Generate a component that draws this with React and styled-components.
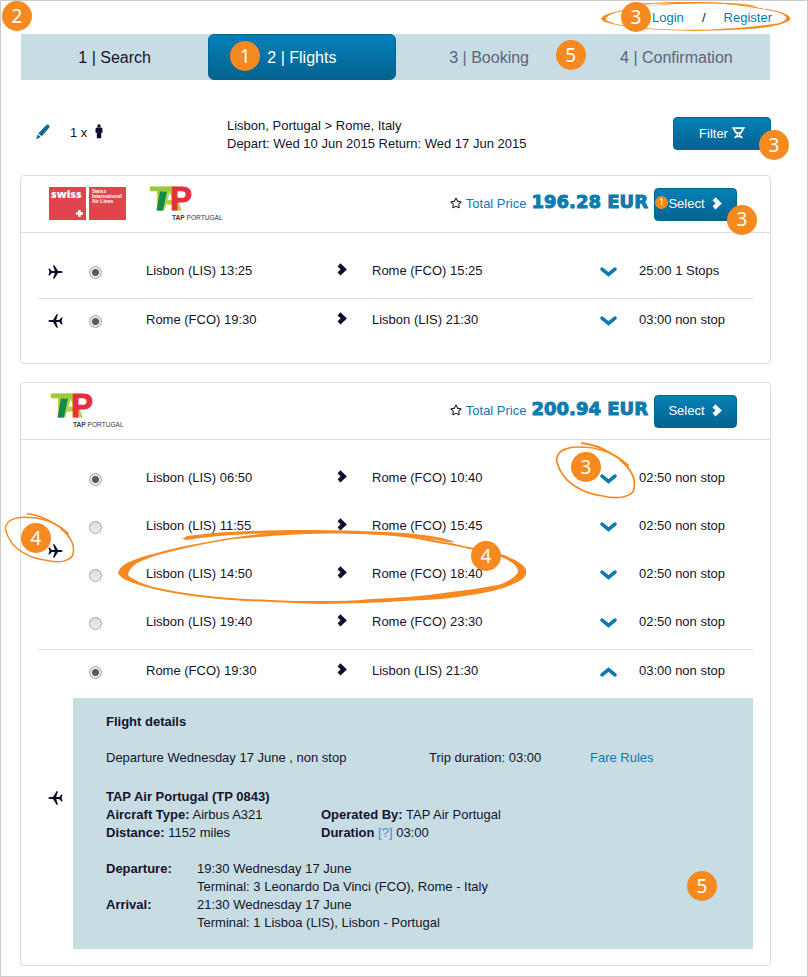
import { Fragment, useState } from 'react';
import styled, { createGlobalStyle } from 'styled-components';
import { FaRegStar } from 'react-icons/fa';

const GlobalStyle = createGlobalStyle`
  * {
    box-sizing: border-box;
  }
  body {
    margin: 0;
    background-color: #ffffff;
    color: #14142b;
    font-family: 'Liberation Sans', Arial, Helvetica, sans-serif;
    font-size: 13px;
    line-height: 18px;
  }
  a {
    color: #0b7bb0;
    text-decoration: none;
  }
  svg {
    display: block;
    overflow: visible;
  }
`;

// Styled Components
const Page = styled.div`
  position: relative;
  min-height: 100vh;
  padding: 0 36px 10px 19px;
  border: 1px solid #cccccc;
`;

const TopBar = styled.div`
  display: flex;
  justify-content: flex-end;
  height: 33px;
  padding-top: 8px;
`;

const AccountLinks = styled.div`
  position: relative;
  display: flex;
  justify-content: space-between;
  width: 120px;
  margin-right: -1px;
`;

const Steps = styled.nav`
  display: grid;
  grid-template-columns: repeat(4, 1fr);
  height: 46px;
  margin: 0 1px;
  background-color: #c8dce3;
`;

const Step = styled.a`
  position: relative;
  display: flex;
  align-items: center;
  justify-content: center;
  padding-top: 2px;
  border-radius: ${({ $active }) => ($active ? '6px' : '0')};
  border: 1px solid ${({ $active }) => ($active ? '#04638f' : 'transparent')};
  background: ${({ $active }) => ($active ? 'linear-gradient(#0580b8, #04638f)' : 'none')};
  color: ${({ $active, $done }) => ($active ? '#ffffff' : $done ? '#14142b' : '#5c647c')};
  font-size: 16px;
`;

const TripBar = styled.section`
  display: grid;
  grid-template-columns: 207px 1fr auto;
  height: 95px;
  padding-top: 37px;
`;

const Travellers = styled.div`
  display: flex;
  align-items: center;
  align-self: start;
  height: 30px;
  padding-left: 16px;
`;

const EditButton = styled.button`
  padding: 0;
  margin-right: 20px;
  border: none;
  background: none;
  cursor: pointer;
`;

const TravellerCount = styled.span`
  padding-top: 2px;
  margin-right: 8px;
`;

const TravellerIcon = styled.span`
  padding-bottom: 2px;
`;

const BlueButton = styled.button`
  position: relative;
  display: flex;
  align-items: center;
  justify-content: center;
  gap: ${({ $gap }) => $gap}px;
  width: ${({ $width }) => $width}px;
  height: 33px;
  padding: 0;
  border: 1px solid #04638f;
  border-radius: 4px;
  background: linear-gradient(#0580b8, #04638f);
  color: #ffffff;
  font: inherit;
  cursor: pointer;

  & > svg {
    margin-bottom: 2px;
  }
`;

const Card = styled.section`
  margin-bottom: 18px;
  border: 1px solid #dddddd;
  border-radius: 4px;

  &:last-child {
    margin-bottom: 0;
  }
`;

const CardHeader = styled.header`
  display: flex;
  align-items: center;
  justify-content: space-between;
  height: 57px;
  padding: 0 33px 0 28px;
  border-bottom: 1px solid #dddddd;
`;

const Logos = styled.div`
  display: flex;
  gap: 22px;
`;

const PriceArea = styled.div`
  display: flex;
  align-items: center;

  & > svg {
    margin-bottom: 2px;
  }
`;

const PriceLabel = styled.span`
  margin: 0 5px 0 4px;
  color: #0b7bb0;
`;

const Price = styled.strong`
  margin-right: 6px;
  padding-bottom: 4px;
  color: #0b7bb0;
  font-family: 'DejaVu Sans', Verdana, sans-serif;
  font-size: 18px;
  font-weight: bold;
  -webkit-text-stroke: 1px #0b7bb0;
`;

const CardBody = styled.div`
  padding: 17px 17px 16px;
`;

const Leg = styled.div`
  display: grid;
  grid-template-columns: 35px 1fr;

  & + & {
    border-top: 1px solid #dddddd;
  }
`;

const Direction = styled.div`
  display: flex;
  align-items: center;
  justify-content: center;
  padding-bottom: 4px;
`;

const PlaneBox = styled.div`
  position: relative;

  & > svg:first-child {
    transform: ${({ $back }) => ($back ? 'scaleX(-1)' : 'none')};
  }
`;

const Row = styled.div`
  position: relative;
  display: grid;
  grid-template-columns: 73px 191fr 35px 228fr 39px 114fr;
  align-items: center;
  padding: 12px 0 18px;
`;

const Radio = styled.input`
  appearance: none;
  width: 13px;
  height: 13px;
  margin: 2px 0 0 16px;
  border: 1px solid #a5a5a5;
  border-radius: 50%;
  background: linear-gradient(#dcdcdc, #ececec);

  &:checked {
    background: radial-gradient(circle, #5a5a5a 0 3px, #e6e6e6 4px);
  }
`;

const Place = styled.label`
  position: relative;
  height: 18px;
`;

const ArrowCell = styled.span`
  padding-bottom: 4px;
`;

const ExpandCell = styled.div`
  position: relative;
  height: 18px;
  padding-top: 5px;
`;

const ExpandButton = styled.button`
  display: block;
  padding: 0;
  border: none;
  background: none;
  cursor: pointer;
`;

const Details = styled.div`
  position: relative;
  padding: 15px 0 17px 33px;
  background-color: #c8dce3;
`;

const DetailsTitle = styled.h3`
  margin: 0 0 18px;
  font-size: 13px;
`;

const Summary = styled.div`
  display: grid;
  grid-template-columns: 323fr 161fr 163fr;
  margin-bottom: 21px;
`;

const Facts = styled.div`
  display: grid;
  grid-template-columns: 215fr 432fr;
  margin-bottom: 18px;
`;

const Times = styled.dl`
  display: grid;
  grid-template-columns: 91px 1fr;
  margin: 0;

  dt {
    font-weight: bold;
  }
  dd {
    margin: 0;
  }
`;

const HelpLink = styled.a`
  color: #4a8ccc;
`;

const Badge = styled.span`
  position: absolute;
  z-index: 2;
  top: ${({ $top }) => $top};
  left: ${({ $left }) => $left};
  right: ${({ $right }) => $right};
  bottom: ${({ $bottom }) => $bottom};
  display: flex;
  align-items: center;
  justify-content: center;
  width: ${({ $small }) => ($small ? 13 : 30)}px;
  height: ${({ $small }) => ($small ? 13 : 30)}px;
  border-radius: 50%;
  background-color: #f6891f;
  color: #ffffff;
  font-family: 'Noto Sans', 'Open Sans', sans-serif;
  font-size: ${({ $small }) => ($small ? 8 : 19)}px;
  font-weight: normal;
  line-height: 1;
`;

const Scribble = styled.svg`
  position: absolute;
  z-index: 1;
  top: ${({ $top }) => $top};
  left: ${({ $left }) => $left};
  width: ${({ $width }) => $width};
  height: ${({ $height }) => $height};
  pointer-events: none;
`;

// Drawings
const WideScribble = (props) => (
  <Scribble viewBox="0 0 407 74" preserveAspectRatio="none" aria-hidden="true" {...props}>
    <path
      fill="#f6891f"
      fillRule="evenodd"
      d="M0 43C1 39 5 35 9 33C17 29 26 26 35 24C52 19 70 15 89 12C110 8 131 5 152 3C180 1 210 0 235 2C252 2 268 3 285 5C302 7 318 11 332 13C341 15 348 17 356 18C367 20 377 22 385 25C397 30 406 35 407 40C408 44 406 48 402 50C389 58 371 62 352 65C330 69 307 70 285 71C257 73 230 73 202 74C185 73 168 73 152 72C128 71 104 70 82 67C65 65 47 62 32 58C21 55 12 52 6 49C3 47 1 45 0 43ZM10 44C11 40 14 36 19 33C29 28 42 24 55 21C75 16 95 12 115 9C127 8 140 7 152 6C180 4 208 3 235 4C252 4 269 5 285 7C301 9 317 13 332 15C341 17 347 18 355 20C366 22 375 25 382 27C390 30 396 34 398 38C400 41 399 43 397 45C392 50 386 53 379 55C364 58 348 60 332 62C305 66 279 68 252 69C235 71 219 71 202 71C185 71 168 71 152 70C128 69 104 68 82 65C65 63 47 60 32 56C25 54 19 51 14 48C12 47 10 46 10 44Z"
    />
    <path
      fill="#f6891f"
      d="M64 9L69 6C78 5 86 4 95 3C124 1 156 0 185 0C219 0 254 1 285 3C297 4 308 5 318 7C325 8 331 10 336 12C331 13 324 11 318 10C296 7 274 5 252 4C213 2 170 3 130 4C108 5 87 7 68 10Z"
    />
  </Scribble>
);

const RoundScribble = (props) => (
  <Scribble viewBox="0 0 79 57" preserveAspectRatio="none" fill="none" stroke="#f6891f" aria-hidden="true" {...props}>
    <path strokeWidth="1.8" d="M25 2C36 3 48 8 56 13C64 17 70 21 73 29" />
    <path
      strokeWidth="1.7"
      d="M73 25C64 17 52 10 41 8C35 6 27 6 21 6C13 6 4 9 2 14C0 18 0 19 1 21C2 26 4 30 7 34C11 40 18 45 24 48C31 52 39 54 47 55C54 57 61 57 67 56C74 54 78 52 78 47C79 42 78 37 76 33C73 27 69 23 64 19"
    />
  </Scribble>
);

const PlaneIcon = () => (
  <svg width="15" height="14" viewBox="0 0 15 14" fill="#0c0c2c">
    <path d="M0.400 3.400H1.600L3.800 6H6.800L5 0.200H6.400L10 6H13Q14.800 6.300 14.900 7Q14.800 7.700 13 8H10L6.400 13.800H5L6.800 8H3.800L1.600 10.600H0.400L1.400 7Z" />
  </svg>
);

const PersonIcon = () => (
  <svg width="8" height="15" viewBox="0 0 8 15" fill="#0c0c2c">
    <circle cx="4" cy="1.900" r="1.700" />
    <path d="M1.800 3.600H6.200Q7.500 3.800 7.500 5V8.800H6.200V14.200H1.800V8.800H0.500V5Q0.500 3.800 1.800 3.600Z" />
  </svg>
);

const PencilIcon = () => (
  <svg width="14" height="16" viewBox="0 0 14 16" fill="#0b6a9c">
    <path d="M9.600 1.800Q11.300 -0.300 12.800 1T13.300 3.600L5.800 12.300L2.200 9.600Z" />
    <path d="M1.600 10.500L4.800 13L0.200 15.400Z" />
  </svg>
);

const FunnelIcon = () => (
  <svg width="13" height="12" viewBox="0 0 13 12" fill="none" stroke="#ffffff">
    <path strokeWidth="1.7" d="M1.300 1.200H11.700L8.600 6.200H4.400Z" />
    <path strokeWidth="1.3" d="M5.300 6V9.500M7.700 6V9.500" />
    <path strokeWidth="1.7" d="M2.500 10.700L4.800 9.400H8.200L10.500 10.700" />
  </svg>
);

const ArrowRight = ({ color = '#0c0c2c' }) => (
  <svg width="11" height="13" viewBox="0 0 11 13" fill="none" stroke={color} strokeWidth="4.2">
    <path d="M2 1.900L6.800 6.400L2 10.900" />
  </svg>
);

const Chevron = ({ up }) => (
  <svg width="17" height="10" viewBox="0 0 17 10" fill="none" stroke="#0b7bb0" strokeWidth="3.6" strokeLinecap="round">
    <path d={up ? 'M2 7.9L8.5 2.5L15 7.9' : 'M2 2.1L8.5 7.5L15 2.1'} />
  </svg>
);

const SwissLogo = () => (
  <svg width="77" height="33" viewBox="0 0 77 33" role="img" aria-label="Swiss International Air Lines">
    <rect width="37" height="33" fill="#e0454b" />
    <rect x="40" width="37" height="33" fill="#e0454b" />
    <text x="2" y="11" fill="#ffffff" fontFamily="Open Sans" fontSize="11" fontWeight="800">
      swiss
    </text>
    <path d="M27 26.500h7M30.500 23v7" stroke="#ffffff" strokeWidth="2.400" />
    <g fill="#ffffff" fontFamily="Liberation Sans" fontSize="5" fontWeight="bold">
      <text x="43" y="6">Swiss</text>
      <text x="43" y="11">International</text>
      <text x="43" y="16">Air Lines</text>
    </g>
  </svg>
);

const TapLogo = () => (
  <svg width="78" height="34" viewBox="0 0 78 34" role="img" aria-label="TAP Portugal">
    <g fontFamily="Liberation Sans" fontSize="33" fontWeight="bold" strokeWidth="1">
      <text x="10" y="23" fill="#b5d334" stroke="#b5d334">
        A
      </text>
      <text x="2" y="23" fill="#9cc93a" stroke="#9cc93a">
        T
      </text>
      <path d="M12 4.500H19L15 23.500H8.500Z" fill="#128a4e" />
      <text x="22" y="23" fill="#e62f3c" stroke="#e62f3c">
        P
      </text>
    </g>
    <text x="24" y="33" fill="#3a3a3a" fontFamily="Liberation Sans" fontSize="6.600">
      <tspan fontWeight="bold">TAP</tspan> PORTUGAL
    </text>
  </svg>
);

const logos = { swiss: SwissLogo, tap: TapLogo };

const offers = [
  {
    id: 'offer1',
    airlines: ['swiss', 'tap'],
    price: '196.28 EUR',
    marked: true,
    legs: [
      [{ from: 'Lisbon (LIS) 13:25', to: 'Rome (FCO) 15:25', duration: '25:00 1 Stops' }],
      [{ from: 'Rome (FCO) 19:30', to: 'Lisbon (LIS) 21:30', duration: '03:00 non stop' }],
    ],
  },
  {
    id: 'offer2',
    airlines: ['tap'],
    price: '200.94 EUR',
    legs: [
      [
        { from: 'Lisbon (LIS) 06:50', to: 'Rome (FCO) 10:40', duration: '02:50 non stop', note: 'expand' },
        { from: 'Lisbon (LIS) 11:55', to: 'Rome (FCO) 15:45', duration: '02:50 non stop' },
        { from: 'Lisbon (LIS) 14:50', to: 'Rome (FCO) 18:40', duration: '02:50 non stop', note: 'row' },
        { from: 'Lisbon (LIS) 19:40', to: 'Rome (FCO) 23:30', duration: '02:50 non stop' },
      ],
      [{ from: 'Rome (FCO) 19:30', to: 'Lisbon (LIS) 21:30', duration: '03:00 non stop', details: true }],
    ],
  },
];

const FlightDetails = () => (
  <Details>
    <DetailsTitle>Flight details</DetailsTitle>
    <Summary>
      <span>Departure Wednesday 17 June , non stop</span>
      <span>Trip duration: 03:00</span>
      <a href="#fare-rules">Fare Rules</a>
    </Summary>
    <strong>TAP Air Portugal (TP 0843)</strong>
    <Facts>
      <span><b>Aircraft Type:</b> Airbus A321</span>
      <span><b>Operated By:</b> TAP Air Portugal</span>
      <span><b>Distance:</b> 1152 miles</span>
      <span><b>Duration</b> <HelpLink href="#duration">[?]</HelpLink> 03:00</span>
    </Facts>
    <Times>
      <dt>Departure:</dt>
      <dd>
        19:30 Wednesday 17 June
        <br />
        Terminal: 3 Leonardo Da Vinci (FCO), Rome - Italy
      </dd>
      <dt>Arrival:</dt>
      <dd>
        21:30 Wednesday 17 June
        <br />
        Terminal: 1 Lisboa (LIS), Lisbon - Portugal
      </dd>
    </Times>
    <Badge $right="36px" $bottom="48px">5</Badge>
  </Details>
);

const FlightLeg = ({ name, flights, back }) => {
  const [selected, setSelected] = useState(0);
  const [open, setOpen] = useState(flights.findIndex((f) => f.details));

  return (
    <Leg>
      <Direction>
        <PlaneBox $back={back}>
          <PlaneIcon />
          {flights.length > 1 && (
            <>
              <RoundScribble $left="-43px" $top="-32px" $width="69px" $height="50px" />
              <Badge $left="-27px" $top="-21px">4</Badge>
            </>
          )}
        </PlaneBox>
      </Direction>
      <div>
        {flights.map((flight, i) => (
          <Fragment key={flight.from}>
            <Row>
              {flight.note === 'row' && <WideScribble $left="45px" $top="-23px" $width="60%" $height="74px" />}
              <Radio
                type="radio"
                id={`${name}-${i}`}
                name={name}
                checked={selected === i}
                onChange={() => setSelected(i)}
              />
              <Place htmlFor={`${name}-${i}`}>{flight.from}</Place>
              <ArrowCell>
                <ArrowRight />
              </ArrowCell>
              <Place htmlFor={`${name}-${i}`}>
                {flight.to}
                {flight.note === 'row' && <Badge $left="99px" $top="-24px">4</Badge>}
              </Place>
              <ExpandCell>
                <ExpandButton type="button" aria-label="Flight details" onClick={() => setOpen(open === i ? -1 : i)}>
                  <Chevron up={open === i} />
                </ExpandButton>
                {flight.note === 'expand' && (
                  <>
                    <RoundScribble $left="-44px" $top="-28px" $width="79px" $height="57px" />
                    <Badge $left="-29px" $top="-17px">3</Badge>
                  </>
                )}
              </ExpandCell>
              <span>{flight.duration}</span>
            </Row>
            {open === i && <FlightDetails />}
          </Fragment>
        ))}
      </div>
    </Leg>
  );
};

const Offer = ({ offer }) => (
  <Card>
    <CardHeader>
      <Logos>
        {offer.airlines.map((airline) => {
          const Logo = logos[airline];
          return <Logo key={airline} />;
        })}
      </Logos>
      <PriceArea>
        <FaRegStar size={12} />
        <PriceLabel>Total Price</PriceLabel>
        <Price>{offer.price}</Price>
        <BlueButton type="button" $width={83} $gap={7}>
          Select
          <ArrowRight color="#ffffff" />
          {offer.marked && (
            <>
              <Badge $small $left="0" $top="7px">1</Badge>
              <Badge $left="72px" $top="16px">3</Badge>
            </>
          )}
        </BlueButton>
      </PriceArea>
    </CardHeader>
    <CardBody>
      {offer.legs.map((flights, i) => (
        <FlightLeg key={i} name={`${offer.id}-leg${i}`} flights={flights} back={i === 1} />
      ))}
    </CardBody>
  </Card>
);

const App = () => (
  <>
    <GlobalStyle />
    <Page>
      <Badge $left="1px" $top="0">2</Badge>
      <TopBar>
        <AccountLinks>
          <WideScribble $left="-51px" $top="-7px" $width="189px" $height="29px" />
          <Badge $left="-31px" $top="-7px">3</Badge>
          <a href="#login">Login</a>
          <span>/</span>
          <a href="#register">Register</a>
        </AccountLinks>
      </TopBar>
      <Steps>
        <Step href="#search" $done>1 | Search</Step>
        <Step href="#flights" $active>
          2 | Flights
          <Badge $left="21px" $top="6px">1</Badge>
        </Step>
        <Step href="#booking">
          3 | Booking
          <Badge $right="-4px" $top="5px">5</Badge>
        </Step>
        <Step href="#confirmation">4 | Confirmation</Step>
      </Steps>
      <TripBar>
        <Travellers>
          <EditButton type="button" aria-label="Edit search">
            <PencilIcon />
          </EditButton>
          <TravellerCount>1 x</TravellerCount>
          <TravellerIcon>
            <PersonIcon />
          </TravellerIcon>
        </Travellers>
        <div>
          Lisbon, Portugal &gt; Rome, Italy
          <br />
          Depart: Wed 10 Jun 2015 Return: Wed 17 Jun 2015
        </div>
        <BlueButton type="button" $width={98} $gap={4}>
          Filter
          <FunnelIcon />
          <Badge $left="85px" $top="12px">3</Badge>
        </BlueButton>
      </TripBar>
      <main>
        {offers.map((offer) => (
          <Offer key={offer.id} offer={offer} />
        ))}
      </main>
    </Page>
  </>
);

export default App;
